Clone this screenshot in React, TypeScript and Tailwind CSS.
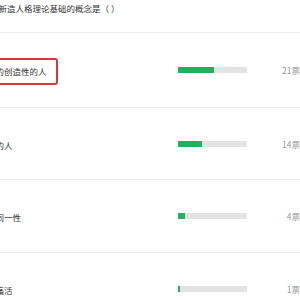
const options = [
  { label: '的创造性的人', votes: 21, h: 'h-[75px]', marked: true },
  { label: '的人', votes: 14, h: 'h-[72px]', marked: false },
  { label: '同一性', votes: 4, h: 'h-[73px]', marked: false },
  { label: '痛活', votes: 1, h: 'h-[73px]', marked: false },
];

const total = options.reduce((s, o) => s + o.votes, 0);

export default function App() {
  return (
    <div className="w-[300px] h-[300px] overflow-hidden bg-white text-[#333] font-['Noto_Sans_CJK_SC',sans-serif] text-[8.5px] leading-[12px]">
      <div className="h-[33px] border-b border-[#ebebeb] pt-[2px]">
        <p className="-ml-[1.5px] whitespace-nowrap">新造人格理论基础的概念是（ ）</p>
      </div>
      {options.map((o) => (
        <div
          key={o.label}
          className={`${o.h} grid grid-cols-[178px_69px_1fr] items-center border-b border-[#ebebeb]`}
        >
          <div className="whitespace-nowrap">
            {o.marked ? (
              <span className="-ml-[13px] inline-block rounded-[3px] border-2 border-[#d4393a] pl-[6.5px] pr-[9.5px] py-[5.5px] translate-y-[1px]">
                {o.label}
              </span>
            ) : (
              <span className="-ml-[4.5px] inline-block translate-y-[1px]">{o.label}</span>
            )}
          </div>
          <div className="h-[6px] bg-[#e3e3e3]">
            <div className="h-full bg-[#1fb25a]" style={{ width: `${Math.max((o.votes / total) * 100, 3)}%` }} />
          </div>
          <div className="text-right text-[#999]">{o.votes}票</div>
        </div>
      ))}
    </div>
  );
}
